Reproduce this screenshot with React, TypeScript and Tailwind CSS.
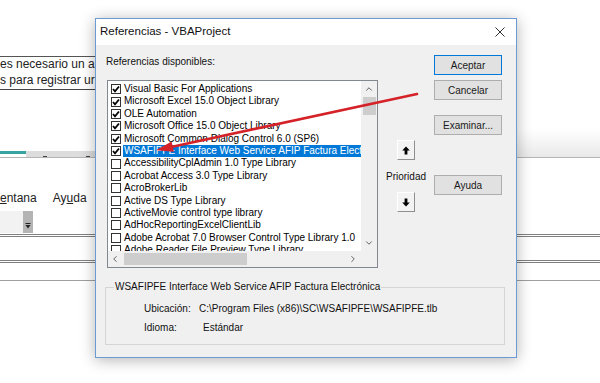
import { ChevronUp, ChevronDown, ChevronLeft, ChevronRight } from 'lucide-react';

interface RefItem {
  label: string;
  checked: boolean;
  selected?: boolean;
}

const references: RefItem[] = [
  { label: 'Visual Basic For Applications', checked: true },
  { label: 'Microsoft Excel 15.0 Object Library', checked: true },
  { label: 'OLE Automation', checked: true },
  { label: 'Microsoft Office 15.0 Object Library', checked: true },
  { label: 'Microsoft Common Dialog Control 6.0 (SP6)', checked: true },
  { label: 'WSAFIPFE Interface Web Service AFIP Factura Electrónica', checked: true, selected: true },
  { label: 'AccessibilityCplAdmin 1.0 Type Library', checked: false },
  { label: 'Acrobat Access 3.0 Type Library', checked: false },
  { label: 'AcroBrokerLib', checked: false },
  { label: 'Active DS Type Library', checked: false },
  { label: 'ActiveMovie control type library', checked: false },
  { label: 'AdHocReportingExcelClientLib', checked: false },
  { label: 'Adobe Acrobat 7.0 Browser Control Type Library 1.0', checked: false },
  { label: 'Adobe Reader File Preview Type Library', checked: false },
];

function CheckBox({ checked }: { checked: boolean }) {
  return (
    <div className="w-[10px] h-[10px] shrink-0 border border-[#333] bg-white flex items-center justify-center">
      {checked && (
        <svg width="8" height="8" viewBox="0 0 8 8">
          <polyline points="1,4 3,6.3 7,1.5" fill="none" stroke="#000" strokeWidth="1.8" />
        </svg>
      )}
    </div>
  );
}

function DialogButton({ label, focused }: { label: string; focused?: boolean }) {
  return (
    <div
      className={`w-[68px] h-[20px] flex items-center justify-center bg-[#e1e1e1] border text-[10px] text-[#1a1a1a] ${
        focused ? 'border-[#0078d7]' : 'border-[#adadad]'
      }`}
    >
      {label}
    </div>
  );
}

function ArrowButton({ down }: { down?: boolean }) {
  return (
    <div className="w-[18px] h-[20px] flex items-center justify-center bg-[#f3f3f3] border border-t-white border-l-white border-r-[#8f8f8f] border-b-[#8f8f8f]">
      <svg width="8" height="9" viewBox="0 0 8 9" className={down ? 'rotate-180' : ''}>
        <polygon points="4,0.5 7.8,4.5 0.2,4.5" fill="#000" />
        <rect x="2.6" y="4" width="2.8" height="4.5" fill="#000" />
      </svg>
    </div>
  );
}

export default function App() {
  return (
    <div className="relative w-[600px] h-[383px] overflow-hidden bg-white font-['Liberation_Sans',Arial,sans-serif]">
      {/* Background document */}
      <div className="flex flex-col text-[12px] text-[#222]">
        <div className="h-[56px]" />
        <div className="w-[95px] overflow-hidden border-t border-[#555]">
          <div className="h-[15px] leading-[15px] whitespace-nowrap">es necesario un a</div>
          <div className="h-[18px] leading-[16px] whitespace-nowrap border-b border-[#444]">
            s para registrar ur
          </div>
        </div>
        <div className="h-[39px]" />
        <div className="h-[29px] flex items-end border-b border-[#b5b5b5]">
          <div className="w-[95px] h-[6px] flex">
            <div className="w-[26px] h-[3px] bg-[#38a3a3]" />
            <div className="flex-1 bg-[#dddddd] relative">
              <div className="absolute left-[17px] bottom-0 w-[4px] h-[1px] bg-[#444]" />
              <div className="absolute left-[60px] bottom-0 w-[4px] h-[1px] bg-[#444]" />
            </div>
          </div>
          <div className="flex-1 h-full bg-gradient-to-b from-white to-[#e9e9e9]" />
        </div>
        <div className="h-[32px]" />
        <div className="h-[16px] leading-[16px] flex gap-[16px] whitespace-nowrap">
          <span>
            <span className="underline">e</span>ntana
          </span>
          <span>
            Ay<span className="underline">u</span>da
          </span>
        </div>
        <div className="h-[5px]" />
        <div className="h-[22px] flex">
          <div className="w-[23px] bg-[#f2f2f2]" />
          <div className="w-[10px] bg-[#b4b4b4] flex items-end justify-center pb-[4px]">
            <svg width="6" height="6" viewBox="0 0 6 6">
              <rect x="0.5" y="0" width="5" height="1" fill="#222" />
              <polygon points="0.5,2 5.5,2 3,5.5" fill="#222" />
            </svg>
          </div>
        </div>
        <div className="mt-[1px] h-[3px] border-y border-[#808080]" />
        <div className="h-[23px]" />
        <div className="h-[3px] border-y border-[#808080]" />
        <div className="h-[17px]" />
        <div className="border-t border-[#a0a0a0]" />
      </div>

      {/* Dialog */}
      <div className="absolute left-[95px] top-[18px] w-[422px] h-[340px] flex flex-col border border-[#6b9bd1] bg-[#f0f0f0] shadow-[0_2px_14px_rgba(0,0,0,0.3)]">
        {/* Title bar */}
        <div className="h-[26px] shrink-0 bg-white flex items-center justify-between pl-[4px] pr-[11px]">
          <span className="text-[11.5px] text-[#111]">Referencias - VBAProject</span>
          <svg width="10" height="10" viewBox="0 0 10 10">
            <line x1="0.5" y1="0.5" x2="9.5" y2="9.5" stroke="#333" strokeWidth="1" />
            <line x1="9.5" y1="0.5" x2="0.5" y2="9.5" stroke="#333" strokeWidth="1" />
          </svg>
        </div>

        {/* Body */}
        <div className="flex-1 flex flex-col pt-[11px] pl-[11px] text-[10px] text-[#111]">
          <div className="flex">
            {/* References list */}
            <div className="w-[271px] flex flex-col">
              <div className="h-[12px] leading-[12px] -ml-[1px]">Referencias disponibles:</div>
              <div className="mt-[12px] h-[188px] border border-[#828790] bg-white flex flex-col">
                <div className="flex-1 flex min-h-0">
                  <div className="flex-1 min-w-0 overflow-hidden pt-[2px]">
                    {references.map((ref, index) => (
                      <div key={index} className="h-[12.4px] flex items-center pl-[3px]">
                        <CheckBox checked={ref.checked} />
                        <div
                          className={`ml-[2px] pl-[1px] flex-1 h-full leading-[12.4px] whitespace-nowrap overflow-hidden ${
                            ref.selected ? 'bg-[#0078d7] text-white' : 'text-black'
                          }`}
                        >
                          {ref.label}
                        </div>
                      </div>
                    ))}
                  </div>
                  <div className="w-[16px] bg-[#f0f0f0] flex flex-col items-center">
                    <div className="h-[16px] flex items-center justify-center">
                      <ChevronUp size={10} strokeWidth={2.2} color="#555" />
                    </div>
                    <div className="w-[13px] h-[18px] bg-[#cdcdcd]" />
                    <div className="flex-1" />
                    <div className="h-[16px] flex items-center justify-center">
                      <ChevronDown size={10} strokeWidth={2.2} color="#555" />
                    </div>
                  </div>
                </div>
                <div className="h-[16px] shrink-0 flex bg-[#f0f0f0]">
                  <div className="w-[14px] flex items-center justify-center">
                    <ChevronLeft size={10} strokeWidth={2.2} color="#555" />
                  </div>
                  <div className="flex-1 flex items-center">
                    <div className="ml-[2px] w-[123px] h-[12px] bg-[#cdcdcd]" />
                  </div>
                  <div className="w-[16px] flex items-center justify-center">
                    <ChevronRight size={10} strokeWidth={2.2} color="#555" />
                  </div>
                  <div className="w-[16px]" />
                </div>
              </div>
            </div>

            {/* Priority */}
            <div className="ml-[6px] w-[44px] flex flex-col items-center pt-[84px]">
              <ArrowButton />
              <div className="mt-[11px] h-[12px] leading-[12px] whitespace-nowrap">Prioridad</div>
              <div className="mt-[9px]">
                <ArrowButton down />
              </div>
            </div>

            {/* Buttons */}
            <div className="ml-[6px] -mt-[1px] flex flex-col">
              <DialogButton label="Aceptar" focused />
              <div className="mt-[5px]">
                <DialogButton label="Cancelar" />
              </div>
              <div className="mt-[15px]">
                <DialogButton label="Examinar..." />
              </div>
              <div className="mt-[40px]">
                <DialogButton label="Ayuda" />
              </div>
            </div>
          </div>

          {/* Selected reference details */}
          <div className="relative mt-[19px] -ml-[2px] w-[400px] h-[58px] border border-[#d5d5d5]">
            <div className="absolute -top-[7px] left-[8px] px-[1px] bg-[#f0f0f0] leading-[12px] whitespace-nowrap">
              WSAFIPFE Interface Web Service AFIP Factura Electrónica
            </div>
            <div className="pt-[15px] pl-[38px] grid grid-cols-[55px_auto] gap-y-[7px] leading-[12px]">
              <span>Ubicación:</span>
              <span className="whitespace-nowrap">C:\Program Files (x86)\SC\WSAFIPFE\WSAFIPFE.tlb</span>
              <span>Idioma:</span>
              <span className="pl-[4px]">Estándar</span>
            </div>
          </div>
        </div>
      </div>

      {/* Red annotation arrow */}
      <svg className="absolute inset-0 pointer-events-none" width="600" height="383" viewBox="0 0 600 383">
        <line x1="417" y1="94" x2="170" y2="147.2" stroke="#d42228" strokeWidth="2.6" strokeLinecap="round" />
        <polygon points="156,150.3 173.9,151.8 171.6,141.4" fill="#d42228" />
      </svg>
    </div>
  );
}
